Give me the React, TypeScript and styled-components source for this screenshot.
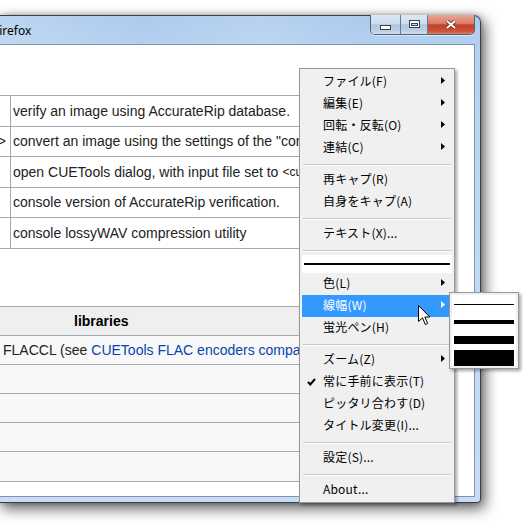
import React from "react";
import styled, { createGlobalStyle } from "styled-components";

const Global = createGlobalStyle`
  html, body { margin: 0; padding: 0; background: #fff; }
  body { width: 528px; height: 528px; overflow: hidden; }
`;

const Stage = styled.div`
  position: relative;
  width: 528px;
  height: 528px;
  padding-top: 15px;
  box-sizing: border-box;
  overflow: hidden;
  background: #fff;
`;

const Window = styled.div`
  width: 481px;
  height: 488px;
  box-sizing: border-box;
  display: flex;
  flex-direction: column;
  padding: 0 5px 5px 0;
  border: 1px solid #36414e;
  border-left: none;
  border-radius: 0 7px 4px 0;
  background: linear-gradient(180deg, #adcbed 0%, #b6d2f1 8%, #c0d9f4 40%, #c6ddf5 100%);
  box-shadow: 3px 5px 14px 1px rgba(0, 0, 0, 0.6), 0 0 5px rgba(0, 0, 0, 0.25);
`;

const TitleBar = styled.div`
  height: 28px;
  flex: none;
  display: flex;
  justify-content: space-between;
  align-items: flex-start;
  background: linear-gradient(
    90deg,
    rgba(255, 255, 255, 0.18) 0%,
    rgba(255, 255, 255, 0) 30%,
    rgba(255, 255, 255, 0.12) 55%,
    rgba(255, 255, 255, 0) 75%
  );
`;

const TitleText = styled.span`
  align-self: center;
  margin-left: -7px;
  font-family: "Noto Sans", "DejaVu Sans", sans-serif;
  font-size: 12px;
  color: #000;
  white-space: nowrap;
`;

const CaptionGroup = styled.div`
  display: flex;
  margin-top: -1px;
  height: 19px;
  border: 1px solid #4f6177;
  border-top: none;
  border-radius: 0 0 5px 5px;
  overflow: hidden;
  box-shadow: 0 1px 0 rgba(255, 255, 255, 0.55);
`;

const CaptionButton = styled.div<{ $w: number; $close?: boolean; $first?: boolean; $top: number }>`
  width: ${(p) => p.$w}px;
  height: 100%;
  box-sizing: border-box;
  display: flex;
  justify-content: center;
  align-items: flex-start;
  border-left: ${(p) => (p.$first ? "none" : "1px solid #687a91")};
  padding-top: ${(p) => p.$top}px;
  background: ${(p) =>
    p.$close
      ? "linear-gradient(180deg, #e8a898 0%, #db7c64 45%, #c4402a 52%, #cb5238 85%, #d9846c 100%)"
      : "linear-gradient(180deg, #dde8f5 0%, #cddcee 45%, #b1c6df 52%, #bdd0e6 85%, #d0dfef 100%)"};
`;

const Client = styled.div`
  flex: 1;
  background: #fff;
  border: 1px solid #7f93ab;
  border-left: none;
  overflow: hidden;
  box-sizing: border-box;
  padding-top: 50px;
  font-family: "Liberation Sans", Arial, sans-serif;
  font-size: 14px;
  color: #222;
`;

const Table = styled.div<{ $gap?: number }>`
  width: 420px;
  margin-top: ${(p) => p.$gap ?? 0}px;
  border-top: 1px solid #a2a9b1;
`;

const Row = styled.div<{ $h: number; $bg?: string }>`
  display: flex;
  height: ${(p) => p.$h}px;
  box-sizing: border-box;
  border-bottom: 1px solid #a2a9b1;
  background: ${(p) => p.$bg ?? "transparent"};
`;

const KeyCell = styled.div`
  width: 11px;
  flex: none;
  box-sizing: border-box;
  display: flex;
  justify-content: flex-end;
  align-items: center;
  padding-right: 4px;
  border-right: 1px solid #a2a9b1;
  overflow: hidden;
  white-space: nowrap;
`;

const DescCell = styled.div<{ $pad?: number; $bold?: boolean }>`
  flex: 1;
  display: flex;
  align-items: center;
  padding-left: ${(p) => p.$pad ?? 2}px;
  white-space: nowrap;
  font-weight: ${(p) => (p.$bold ? 700 : 400)};
  color: ${(p) => (p.$bold ? "#000" : "#222")};
`;

const Small = styled.span`
  font-size: 12px;
  margin-left: 4px;
`;

const Link = styled.span`
  color: #0645ad;
  margin-left: 4px;
`;

const Menu = styled.div`
  position: absolute;
  left: 299px;
  top: 68px;
  width: 156px;
  box-sizing: border-box;
  border: 1px solid #979797;
  background: #f0f0f0;
  padding: 2px 0 1px;
  box-shadow: 2px 2px 3px rgba(0, 0, 0, 0.35);
  font-family: "Noto Sans CJK JP", "Noto Sans", sans-serif;
  font-size: 12px;
  color: #000;
`;

const Item = styled.div<{ $active?: boolean }>`
  height: 22px;
  margin: 0 2px;
  display: flex;
  align-items: center;
  background: ${(p) => (p.$active ? "#3399ff" : "transparent")};
  color: ${(p) => (p.$active ? "#fff" : "#000")};
`;

const CheckSlot = styled.span`
  width: 21px;
  flex: none;
  display: flex;
  align-items: center;
  padding-left: 5px;
  box-sizing: border-box;
`;

const Label = styled.span`
  flex: 1;
  line-height: 18px;
  margin-top: -2px;
  letter-spacing: 0.2px;
  white-space: nowrap;
`;

const ArrowIcon = styled.svg`
  flex: none;
  margin-right: 7px;
  margin-top: -4px;
`;

const Separator = styled.div`
  height: 10px;
  margin: 0 3px;
  background: linear-gradient(
    180deg,
    transparent 0,
    transparent 5px,
    #c6c6c6 5px,
    #c6c6c6 6px,
    #ffffff 6px,
    #ffffff 7px,
    transparent 7px
  );
`;

const LineSample = styled.div`
  height: 18px;
  margin: 0 2px;
  padding: 0 2px;
  background: #fff;
  display: flex;
  align-items: center;
`;

const SolidLine = styled.div<{ $w: number }>`
  width: 100%;
  height: ${(p) => p.$w}px;
  background: #000;
`;

const SubMenu = styled.div`
  position: absolute;
  left: 449px;
  top: 292px;
  width: 70px;
  height: 77px;
  box-sizing: border-box;
  border: 1px solid #979797;
  background: #fff;
  padding: 2px 4px 1px;
  box-shadow: 2px 2px 3px rgba(0, 0, 0, 0.35), inset 0 0 0 2px #f0f0f0;
`;

const WidthOption = styled.div`
  height: 18px;
  display: flex;
  align-items: center;
`;

const Cursor = styled.svg`
  position: absolute;
  left: 418px;
  top: 305px;
`;

const Arrow = ({ white }: { white?: boolean }) => (
  <ArrowIcon width="4" height="7" viewBox="0 0 4 7">
    <polygon points="0,0 4,3.5 0,7" fill={white ? "#fff" : "#000"} />
  </ArrowIcon>
);

const CheckMark = () => (
  <svg width="9" height="8" viewBox="0 0 9 8">
    <path d="M1 4 L3.3 6.5 L8 1" fill="none" stroke="#000" strokeWidth="2" />
  </svg>
);

type MenuEntry =
  | { kind: "item"; label: string; sub?: boolean; active?: boolean; checked?: boolean }
  | { kind: "sep" }
  | { kind: "line" };

const entries: MenuEntry[] = [
  { kind: "item", label: "ファイル(F)", sub: true },
  { kind: "item", label: "編集(E)", sub: true },
  { kind: "item", label: "回転・反転(O)", sub: true },
  { kind: "item", label: "連結(C)", sub: true },
  { kind: "sep" },
  { kind: "item", label: "再キャプ(R)" },
  { kind: "item", label: "自身をキャプ(A)" },
  { kind: "sep" },
  { kind: "item", label: "テキスト(X)..." },
  { kind: "sep" },
  { kind: "line" },
  { kind: "item", label: "色(L)", sub: true },
  { kind: "item", label: "線幅(W)", sub: true, active: true },
  { kind: "item", label: "蛍光ペン(H)" },
  { kind: "sep" },
  { kind: "item", label: "ズーム(Z)", sub: true },
  { kind: "item", label: "常に手前に表示(T)", checked: true },
  { kind: "item", label: "ピッタリ合わす(D)" },
  { kind: "item", label: "タイトル変更(I)..." },
  { kind: "sep" },
  { kind: "item", label: "設定(S)..." },
  { kind: "sep" },
  { kind: "item", label: "About..." },
];

const ROW1 = 30.5;
const ROW2 = 29.1;

export default function App() {
  return (
    <>
      <Global />
      <Stage>
        <Window>
          <TitleBar>
            <TitleText>Firefox</TitleText>
            <CaptionGroup>
              <CaptionButton $w={29} $first $top={10}>
                <svg width="11" height="5" viewBox="0 0 11 5">
                  <rect x="0.5" y="0.5" width="10" height="4" fill="#fff" stroke="#34414f" />
                </svg>
              </CaptionButton>
              <CaptionButton $w={27} $top={5}>
                <svg width="11" height="8" viewBox="0 0 11 8">
                  <rect x="0.5" y="0.5" width="10" height="7" fill="#fff" stroke="#34414f" />
                  <rect x="2.5" y="3.5" width="6" height="2" fill="#c9d9ea" stroke="#34414f" />
                </svg>
              </CaptionButton>
              <CaptionButton $w={47} $close $top={5}>
                <svg width="12" height="9" viewBox="0 0 12 9">
                  <path d="M2 1 L10 8 M10 1 L2 8" stroke="#5a2a1e" strokeWidth="3.6" />
                  <path d="M2 1 L10 8 M10 1 L2 8" stroke="#fff" strokeWidth="2" />
                </svg>
              </CaptionButton>
            </CaptionGroup>
          </TitleBar>
          <Client>
            <Table>
              <Row $h={ROW1}>
                <KeyCell />
                <DescCell>verify an image using AccurateRip database.</DescCell>
              </Row>
              <Row $h={ROW1}>
                <KeyCell>&lt;file&gt;</KeyCell>
                <DescCell>convert an image using the settings of the "converter" profile.</DescCell>
              </Row>
              <Row $h={ROW1}>
                <KeyCell />
                <DescCell>
                  open CUETools dialog, with input file set to<Small>&lt;cue file&gt;</Small>
                </DescCell>
              </Row>
              <Row $h={ROW1}>
                <KeyCell />
                <DescCell>console version of AccurateRip verification.</DescCell>
              </Row>
              <Row $h={ROW1}>
                <KeyCell />
                <DescCell>console lossyWAV compression utility</DescCell>
              </Row>
            </Table>
            <Table $gap={57.5}>
              <Row $h={ROW2} $bg="#efefef">
                <DescCell $pad={74} $bold>
                  libraries
                </DescCell>
              </Row>
              <Row $h={ROW2} $bg="#f8f8f8">
                <DescCell $pad={3}>
                  FLACCL (see<Link>CUETools FLAC encoders comparison</Link>)
                </DescCell>
              </Row>
              <Row $h={ROW2} $bg="#f8f8f8" />
              <Row $h={ROW2} $bg="#f8f8f8" />
              <Row $h={ROW2} $bg="#f8f8f8" />
              <Row $h={ROW2} $bg="#f8f8f8" />
            </Table>
          </Client>
        </Window>

        <Menu>
          {entries.map((e, i) => {
            if (e.kind === "sep") return <Separator key={i} />;
            if (e.kind === "line")
              return (
                <LineSample key={i}>
                  <SolidLine $w={2} />
                </LineSample>
              );
            return (
              <Item key={i} $active={e.active}>
                <CheckSlot>{e.checked ? <CheckMark /> : null}</CheckSlot>
                <Label>{e.label}</Label>
                {e.sub ? <Arrow white={e.active} /> : null}
              </Item>
            );
          })}
        </Menu>

        <SubMenu>
          {[1, 4, 8, 16].map((w) => (
            <WidthOption key={w}>
              <SolidLine $w={w} />
            </WidthOption>
          ))}
        </SubMenu>

        <Cursor width="13" height="21" viewBox="0 0 13 21">
          <polygon
            points="0.5,0.5 0.5,16.5 4.5,12.8 7.3,19.5 9.6,18.5 6.9,12 11.8,12"
            fill="#fff"
            stroke="#000"
            strokeWidth="1"
            strokeLinejoin="miter"
          />
        </Cursor>
      </Stage>
    </>
  );
}
